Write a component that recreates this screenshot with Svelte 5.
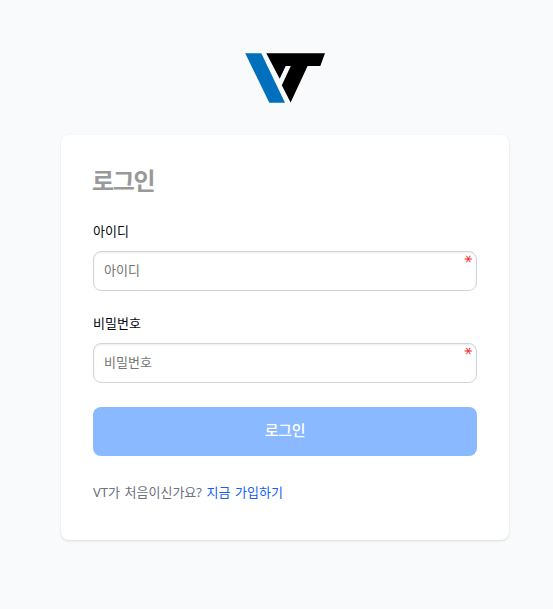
<script>
  let username = $state('');
  let password = $state('');
</script>

<main>
  <svg class="logo" viewBox="0 0 80 50" role="img" aria-label="VT">
    <polygon points="0.2,0.2 16.3,0.2 40,49.8 24.3,49.8" fill="#0070bd" />
    <path d="M21.3 .2H80L75.3 13H62.6L45.6 49.5L36.8 32.3L45.8 13H40.7L34.7 25.8Z" fill="#000" />
  </svg>
  <form class="card" onsubmit={(event) => event.preventDefault()}>
    <h1>로그인</h1>
    <div class="field">
      <label for="username">아이디</label>
      <div class="control">
        <input id="username" type="text" placeholder="아이디" bind:value={username} />
        <span class="required">*</span>
      </div>
    </div>
    <div class="field">
      <label for="password">비밀번호</label>
      <div class="control">
        <input id="password" type="password" placeholder="비밀번호" bind:value={password} />
        <span class="required">*</span>
      </div>
    </div>
    <button type="submit">로그인</button>
    <p>VT가 처음이신가요? <a href="#signup">지금 가입하기</a></p>
  </form>
</main>

<style>
  :global(body) {
    background: #f9fafb;
  }
  main {
    box-sizing: border-box;
    min-height: 609px;
    padding: 53px 44px 0 61px;
    display: flex;
    flex-direction: column;
    align-items: center;
    font-family: 'Noto Sans', 'Noto Sans CJK KR', sans-serif;
    font-size: 13px;
    line-height: 20px;
  }
  .logo {
    width: 80px;
    height: 50px;
    flex: none;
  }
  .card {
    box-sizing: border-box;
    width: 448px;
    height: 405px;
    margin-top: 32px;
    padding: 30px 32px 0;
    border-radius: 8px;
    background: #fff;
    box-shadow: 0 1px 3px rgba(0, 0, 0, 0.1), 0 1px 2px -1px rgba(0, 0, 0, 0.1);
  }
  h1 {
    margin: 0 0 24px -1px;
    color: #999;
    font-size: 24px;
    font-weight: 700;
    line-height: 32px;
    letter-spacing: -1.3px;
  }
  .field {
    margin-bottom: 22px;
  }
  label {
    display: block;
    margin-bottom: 10px;
    height: 20px;
    line-height: 20px;
    color: #030712;
    font-weight: 400;
  }
  .control {
    position: relative;
    height: 40px;
  }
  input {
    box-sizing: border-box;
    display: block;
    width: 384px;
    height: 40px;
    padding: 0 10px 3px;
    border: 1px solid #d1d5db;
    border-radius: 8px;
    outline: none;
    background: #fff;
    box-shadow: inset 0 1px 2px rgba(0, 0, 0, 0.08);
    color: #111827;
    font: inherit;
  }
  input::placeholder {
    color: #757575;
    opacity: 1;
  }
  .required {
    position: absolute;
    top: 2px;
    right: 0;
    width: 16px;
    height: 12px;
    color: #ef2b2b;
    font-family: 'DejaVu Sans', sans-serif;
    font-size: 16px;
    line-height: 19px;
    text-align: center;
    transform: rotate(90deg);
  }
  button {
    display: block;
    width: 384px;
    height: 49px;
    margin: 24px 0 0;
    padding: 0 0 3px;
    border: 0;
    border-radius: 8px;
    background: #8bb9ff;
    color: #fff;
    font: 500 15px/24px 'Noto Sans CJK KR', sans-serif;
    letter-spacing: -0.3px;
  }
  p {
    margin: 26px 0 0;
    color: #6b7280;
    word-spacing: 1.2px;
  }
  a {
    color: #155dfc;
    text-decoration: none;
  }
</style>
